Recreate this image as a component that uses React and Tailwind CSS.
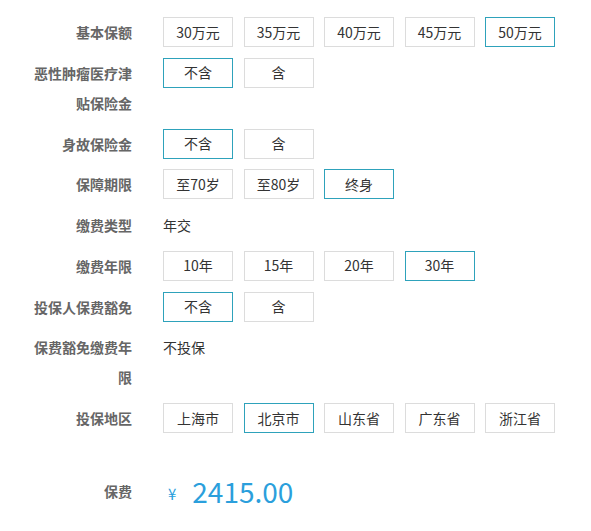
import React from "react";

const rows = [
  { label: "基本保额", options: ["30万元", "35万元", "40万元", "45万元", "50万元"], selected: 4 },
  { label: "恶性肿瘤医疗津贴保险金", options: ["不含", "含"], selected: 0 },
  { label: "身故保险金", options: ["不含", "含"], selected: 0 },
  { label: "保障期限", options: ["至70岁", "至80岁", "终身"], selected: 2 },
  { label: "缴费类型", text: "年交" },
  { label: "缴费年限", options: ["10年", "15年", "20年", "30年"], selected: 3 },
  { label: "投保人保费豁免", options: ["不含", "含"], selected: 0 },
  { label: "保费豁免缴费年限", text: "不投保" },
  { label: "投保地区", options: ["上海市", "北京市", "山东省", "广东省", "浙江省"], selected: 1 },
];

const Option = ({ children, active }) => (
  <div
    className={
      active
        ? "w-[70px] h-[30px] flex items-center justify-center border border-[#2ea2bb] text-[14px] text-[#333]"
        : "w-[70px] h-[30px] flex items-center justify-center border border-[#dcdcdc] text-[14px] text-[#333]"
    }
  >
    {children}
  </div>
);

const Row = ({ row }) => (
  <div className="flex items-start mb-[10.75px]">
    <div className="w-[100px] ml-[32px] text-right text-[14px] leading-[30px] font-bold text-[#666]">
      {row.label}
    </div>
    <div className="ml-[31px] flex gap-[10.5px]">
      {row.options ? (
        row.options.map((o, i) => (
          <Option key={o} active={i === row.selected}>
            {o}
          </Option>
        ))
      ) : (
        <span className="text-[14px] leading-[30px] text-[#333]">{row.text}</span>
      )}
    </div>
  </div>
);

export default function App() {
  return (
    <div
      className="w-[591px] h-[531px] bg-white pt-[17px] overflow-hidden"
      style={{ fontFamily: '"Noto Sans CJK SC", "Noto Sans", sans-serif' }}
    >
      {rows.map((r) => (
        <Row key={r.label} row={r} />
      ))}
      <div className="flex items-center mt-[38px] h-[40px]">
        <div className="w-[100px] ml-[32px] text-right text-[14px] font-bold text-[#666]">保费</div>
        <div className="ml-[36px] flex items-center text-[#2b9fdc]">
          <span className="text-[15px] mt-[6px]">¥</span>
          <span className="ml-[16px] text-[28px] leading-none">2415.00</span>
        </div>
      </div>
    </div>
  );
}
